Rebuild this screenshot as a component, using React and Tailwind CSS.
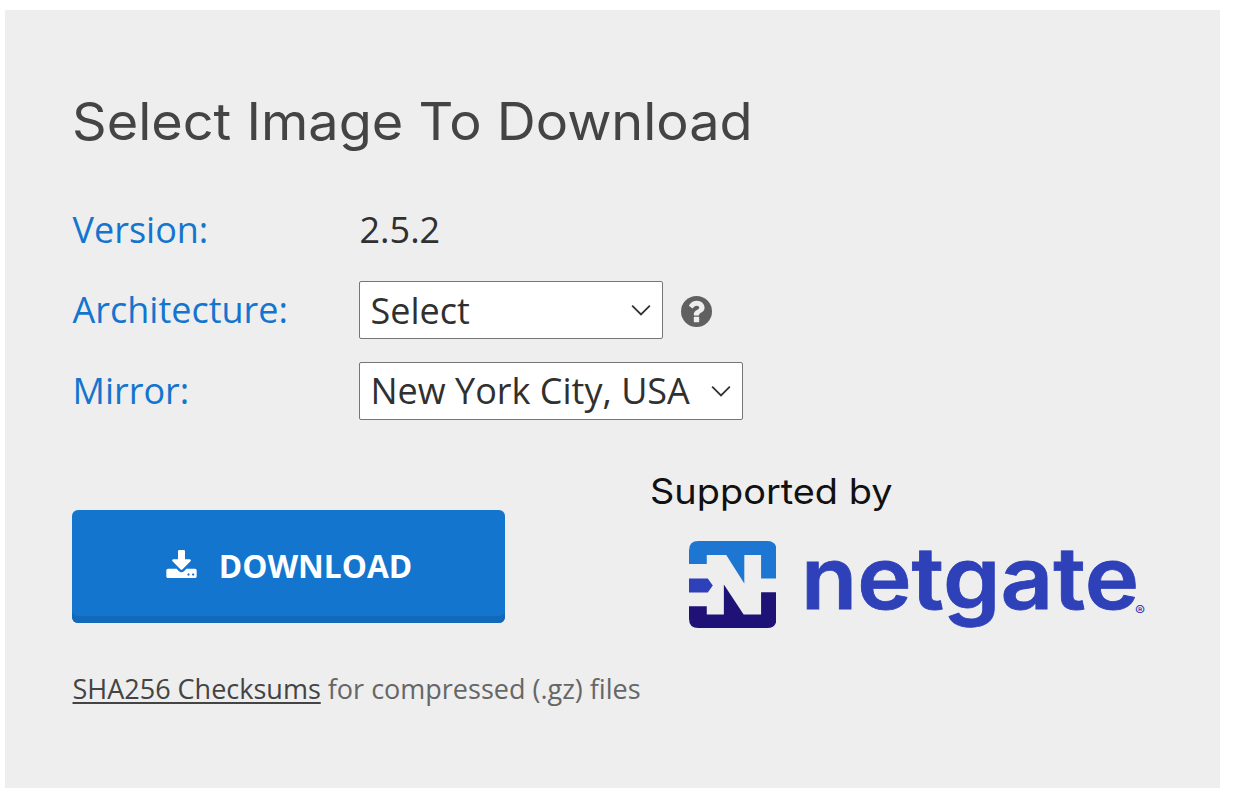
function SelectBox({ value, className }) {
  return (
    <div className="relative">
      <select
        defaultValue={value}
        className={`block h-[58px] appearance-none rounded-[2px] border border-[#767676] bg-white pl-[10.5px] text-[36px] leading-[54px] text-[#303030] outline-none ${className}`}
      >
        <option>{value}</option>
      </select>
      <svg className="pointer-events-none absolute right-[12px] top-[23px] h-[13px] w-[20px]" viewBox="0 0 21 13" fill="none" stroke="#333" strokeWidth="1.9">
        <path d="M1.2 1.4 L10.5 10.7 L19.8 1.4" />
      </svg>
    </div>
  );
}

function QuestionIcon() {
  return (
    <svg className="ml-[18px] mt-[2px] h-[31px] w-[31px]" viewBox="128 128 1536 1536">
      <circle cx="896" cy="896" r="768" fill="#606060" />
      <g transform="translate(896 896) scale(1.04) translate(-896 -896)" fill="#eeeeee">
        <path d="M1024 1376v-192q0-14-9-23t-23-9h-192q-14 0-23 9t-9 23v192q0 14 9 23t23 9h192q14 0 23-9t9-23zm256-672q0-88-55.5-163t-138.5-116-170-41q-243 0-371 213-15 24 8 42l132 100q7 6 19 6 16 0 25-12 53-68 86-92 34-24 86-24 48 0 85.5 26t37.5 59q0 38-20 61t-68 45q-63 28-115.5 86.5t-52.5 125.5v36q0 14 9 23t23 9h192q14 0 23-9t9-23q0-19 21.5-49.5t54.5-49.5q32-18 49-28.5t46-35 44.5-48 28-60.5 12.5-81z" />
      </g>
    </svg>
  );
}

function DownloadIcon() {
  return (
    <svg className="mb-[4px] ml-[1px] h-[28px] w-[31px]" viewBox="64 0 1664 1536" fill="white">
      <path d="M1344 1344q0-26-19-45t-45-19-45 19-19 45 19 45 45 19 45-19 19-45zm256 0q0-26-19-45t-45-19-45 19-19 45 19 45 45 19 45-19 19-45zm128-224v320q0 40-28 68t-68 28h-1472q-40 0-68-28t-28-68v-320q0-40 28-68t68-28h465l135 136q58 56 136 56t136-56l136-136h464q40 0 68 28t28 68zm-325-569q17 41-14 70l-448 448q-18 19-45 19t-45-19l-448-448q-31-29-14-70 17-39 59-39h256v-448q0-26 19-45t45-19h256q26 0 45 19t19 45v448h256q42 0 59 39z" />
    </svg>
  );
}

function NetgateMark() {
  return (
    <svg className="ml-[0.5px] h-[87px] w-[87.5px] shrink-0" viewBox="147 243 261 260" preserveAspectRatio="none">
      <path fill="#1d76d1" d="M147 312V271Q147 243 175 243H380Q408 243 408 271V355H362V285H312V370L258 285H200V312Z" />
      <path fill="#2e41b8" d="M147 355H203L218 376L203 397H147Z" />
      <path fill="#1f1276" d="M147 438H200V463H251V373L310 463H362V396H408V475Q408 503 380 503H175Q147 503 147 475Z" />
    </svg>
  );
}

export default function App() {
  return (
    <div className="h-[798px] w-[1233px] overflow-hidden bg-white pl-[5px] pt-[10px] font-['Open_Sans',sans-serif]">
      <main className="flex h-[778px] w-[1215px] flex-col bg-[#eeeeee] pl-[67px] pt-[77px]">
        <h1 className="h-[70px] origin-left scale-x-[1.039] whitespace-nowrap font-['Inter',sans-serif] text-[52px] leading-[70px] text-[#444]">
          Select Image To Download
        </h1>

        <div className="mt-[43px] grid grid-cols-[287px_auto] grid-rows-[58px_58px_58px] items-center gap-y-[23px] text-[36px] leading-[58px] text-[#1475cf]">
          <div className="pl-[0.5px] pt-[2px]">Version:</div>
          <div className="pl-[0.5px] pt-[2px] text-[#303030]">2.5.2</div>
          <div className="pl-[0.5px]">Architecture:</div>
          <div className="flex items-center">
            <SelectBox value="Select" className="w-[304px] pt-[2px]" />
            <QuestionIcon />
          </div>
          <div className="pl-[0.5px]">Mirror:</div>
          <div className="flex">
            <SelectBox value="New York City, USA" className="w-[384px]" />
          </div>
        </div>

        <div className="mt-[52px] flex h-[170px]">
          <button className="mt-[38px] flex h-[113px] w-[433px] items-center justify-center gap-[22px] rounded-[6px] bg-[#1475cf] pb-px text-[31.7px] font-bold text-white shadow-[inset_0_-7px_0_#1268b9]">
            <DownloadIcon />
            <span>DOWNLOAD</span>
          </button>
          <div className="ml-[145px] font-['Inter',sans-serif]">
            <div className="-mt-px h-[40px] w-[223px] origin-left scale-x-[1.083] whitespace-nowrap text-[35px] leading-[40px] text-[#111]">Supported by</div>
            <div className="ml-[38px] mt-[30px] flex h-[87px]">
              <NetgateMark />
              <div className="-mt-[6px] ml-[25px] flex whitespace-nowrap text-[#2e41b8]">
                <span className="w-[334px] origin-left scale-x-[1.068] text-[86px] font-semibold leading-[87px] [-webkit-text-stroke:0.8px_#2e41b8]">netgate</span>
                <span className="mt-[67px] text-[15px] leading-[18px]">®</span>
              </div>
            </div>
          </div>
        </div>

        <p className="mt-[27px] whitespace-nowrap pl-[0.5px] text-[27px] leading-[40px] text-[#666]">
          <a className="text-[#444] underline decoration-2 underline-offset-[3px]">SHA256 Checksums</a> for compressed (.gz) files
        </p>
      </main>
    </div>
  );
}
